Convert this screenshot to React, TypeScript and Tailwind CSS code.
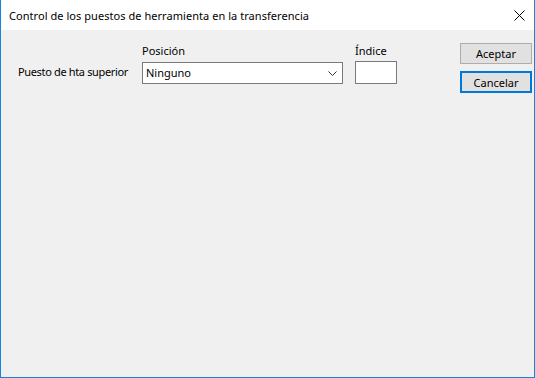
export default function App() {
  return (
    <div className="w-[535px] h-[378px] flex flex-col bg-[#f0f0f0] border-l border-r border-b border-[#1883d7] font-['Noto_Sans',sans-serif] text-[11px] text-black">
      <div className="h-[30px] shrink-0 bg-white flex items-center justify-between pl-[8px] pr-[9px]">
        <span className="leading-none tracking-[0.05px]">Control de los puestos de herramienta en la transferencia</span>
        <svg width="11" height="11" viewBox="0 0 11 11" className="mt-[1px]">
          <path d="M0.5 0.5 L10.5 10.5 M10.5 0.5 L0.5 10.5" stroke="#000" strokeWidth="1" />
        </svg>
      </div>
      <div className="flex flex-1">
        <div className="flex-1 pl-[16px] pt-[13px]">
          <div className="flex h-[16px] leading-[16px]">
            <div className="w-[125px]" />
            <div className="w-[213px]">Posición</div>
            <div>Índice</div>
          </div>
          <div className="flex items-start mt-[2px]">
            <div className="w-[125px] h-[23px] pl-[1px] flex items-center whitespace-nowrap tracking-[-0.35px]">Puesto de hta superior</div>
            <div className="w-[201px] mt-[1px] h-[22px] bg-white border border-[#7a7a7a] flex items-center justify-between pl-[3px] pr-[5px]">
              <span>Ninguno</span>
              <svg width="9" height="5" viewBox="0 0 9 5">
                <path d="M0.5 0.5 L4.5 4.5 L8.5 0.5" fill="none" stroke="#333" strokeWidth="1" />
              </svg>
            </div>
            <div className="ml-[12px] w-[42px] h-[23px] bg-white border border-[#7a7a7a]" />
          </div>
        </div>
        <div className="w-[72px] mr-[2px] pt-[13px] flex flex-col gap-[7px]">
          <button className="h-[21px] bg-[#e1e1e1] border border-[#adadad] leading-none">Aceptar</button>
          <button className="h-[22px] bg-[#e1e1e1] border-2 border-[#0078d7] leading-none">Cancelar</button>
        </div>
      </div>
    </div>
  )
}
